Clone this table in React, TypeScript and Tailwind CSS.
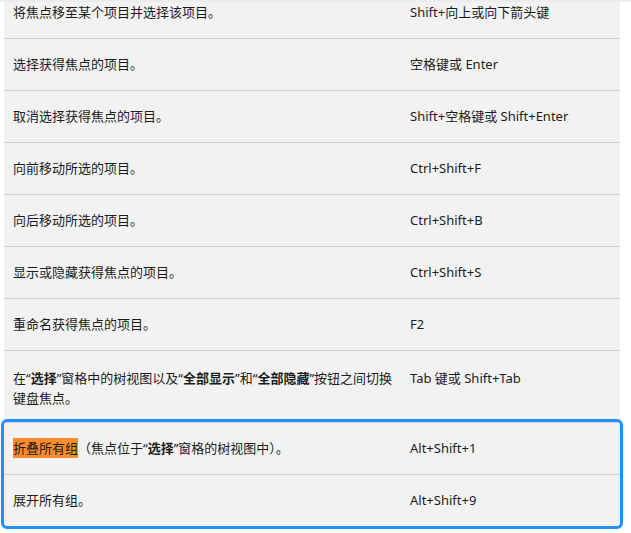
const rows: { action: React.ReactNode; keys: string; tall?: boolean }[] = [
  { action: "将焦点移至某个项目并选择该项目。", keys: "Shift+向上或向下箭头键" },
  { action: "选择获得焦点的项目。", keys: "空格键或 Enter" },
  { action: "取消选择获得焦点的项目。", keys: "Shift+空格键或 Shift+Enter" },
  { action: "向前移动所选的项目。", keys: "Ctrl+Shift+F" },
  { action: "向后移动所选的项目。", keys: "Ctrl+Shift+B" },
  { action: "显示或隐藏获得焦点的项目。", keys: "Ctrl+Shift+S" },
  { action: "重命名获得焦点的项目。", keys: "F2" },
  {
    action: (
      <>
        在“<b>选择</b>”窗格中的树视图以及“<b>全部显示</b>”和“<b>全部隐藏</b>”按钮之间切换键盘焦点。
      </>
    ),
    keys: "Tab 键或 Shift+Tab",
    tall: true,
  },
];

function Row({
  action,
  keys,
  tall,
  border = true,
}: {
  action: React.ReactNode;
  keys: string;
  tall?: boolean;
  border?: boolean;
}) {
  return (
    <div
      className={`flex items-start leading-[20px] ${
        tall ? "pt-[17px] pb-[13px]" : "pt-[15px] pb-[16px]"
      } ${border ? "border-b border-[#d2d2d2]" : ""}`}
    >
      <div className="w-[406px] shrink-0 pl-[9px] pr-[9px]">{action}</div>
      <div className="flex-1">{keys}</div>
    </div>
  );
}

export default function App() {
  return (
    <div
      className="h-[533px] overflow-hidden bg-white text-[13px] text-[#1b1b1b]"
      style={{ fontFamily: '"Noto Sans", "Noto Sans CJK SC", sans-serif' }}
    >
      {/* faint header edge */}
      <div className="relative z-10 h-[2px] bg-[#ececec]"></div>

      <div className="-mt-[15px] ml-[4px] w-[616px] bg-[#f2f2f2]">
        {rows.map((r, i) => (
          <Row key={i} action={r.action} keys={r.keys} tall={r.tall} />
        ))}

        {/* focused group */}
        <div className="rounded-[3px] outline-[3px] outline-solid outline-[#1e90ff]">
          <div className="border-t border-[#d2d2d2]">
            <Row
              action={
                <>
                  <span className="bg-[#fe8b2c] py-[1px]">折叠所有组</span>
                  （焦点位于“<b>选择</b>”窗格的树视图中）。
                </>
              }
              keys="Alt+Shift+1"
            />
          </div>
          <Row action="展开所有组。" keys="Alt+Shift+9" border={false} />
        </div>
      </div>
    </div>
  );
}
